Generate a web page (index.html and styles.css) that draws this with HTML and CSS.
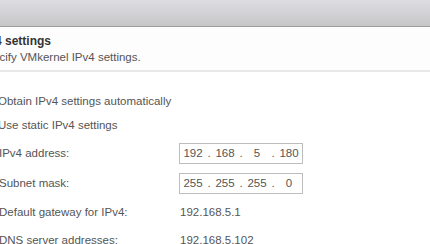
FILE: index.html
```html
<!DOCTYPE html>
<html lang="en">

<head>
    <meta charset="UTF-8">
    <title>Add Networking - IPv4 settings</title>
    <link rel="stylesheet" href="styles.css">
</head>

<body>

    <section class="dialog">
        <header class="titlebar"></header>

        <div class="stephead">
            <h2 class="steptitle">IPv4 settings</h2>
            <p class="stepdesc">Specify VMkernel IPv4 settings.</p>
        </div>

        <form class="ipform">
            <label class="radio"><input type="radio" name="mode">Obtain IPv4 settings automatically</label>
            <label class="radio"><input type="radio" name="mode" checked>Use static IPv4 settings</label>

            <div class="row field">
                <span class="label">IPv4 address:</span>
                <div class="ipbox">
                    <span class="octet">192</span><span class="dot">.</span>
                    <span class="octet">168</span><span class="dot">.</span>
                    <span class="octet">5</span><span class="dot">.</span>
                    <span class="octet">180</span>
                </div>
            </div>
            <div class="row field">
                <span class="label">Subnet mask:</span>
                <div class="ipbox">
                    <span class="octet">255</span><span class="dot">.</span>
                    <span class="octet">255</span><span class="dot">.</span>
                    <span class="octet">255</span><span class="dot">.</span>
                    <span class="octet">0</span>
                </div>
            </div>
            <div class="row">
                <span class="label">Default gateway for IPv4:</span>
                <span class="value">192.168.5.1</span>
            </div>
            <div class="row">
                <span class="label">DNS server addresses:</span>
                <span class="value">192.168.5.102</span>
            </div>
        </form>
    </section>

</body>

</html>
```

FILE: styles.css
```css
body {
    margin: 0;
    background-color: white;
    overflow: hidden;
    font-family: "Liberation Sans", Arial, sans-serif;
    font-size: 11.5px;
    color: #555;
}

.dialog {
    margin-left: -32px;
}

.titlebar {
    height: 26px;
    margin-left: 32px;
    background: linear-gradient(#dedee2, #c6c6c8);
    border-bottom: 1px solid #9c9c9c;
}

.stephead {
    padding: 6px 0 5px 11px;
    background-color: #fdfdfd;
    border-bottom: 2px solid #e8e8e8;
}

.steptitle {
    margin: 0 0 0 -2px;
    font-size: 12px;
    line-height: 16px;
    color: #333;
}

.stepdesc {
    margin: 0;
    line-height: 16px;
    color: #555;
}

.ipform {
    padding: 17px 0 0 31px;
}

.radio {
    display: flex;
    align-items: center;
    height: 24px;
    margin-left: -21px;
}

.radio input {
    margin: 0 7px 0 0;
    width: 13px;
    height: 13px;
}

.row {
    display: flex;
    align-items: center;
    height: 28px;
}

.field {
    height: 30px;
}

.row:first-of-type {
    margin-top: 1px;
}

.label {
    width: 180px;
}

.ipbox {
    display: flex;
    align-items: center;
    width: 122px;
    height: 19px;
    border: 1px solid #bdbdbd;
    background-color: white;
    color: #555;
}

.octet {
    width: 26px;
    text-align: center;
}

.dot {
    width: 6px;
    text-align: center;
}

.value {
    padding-left: 1px;
}
```
